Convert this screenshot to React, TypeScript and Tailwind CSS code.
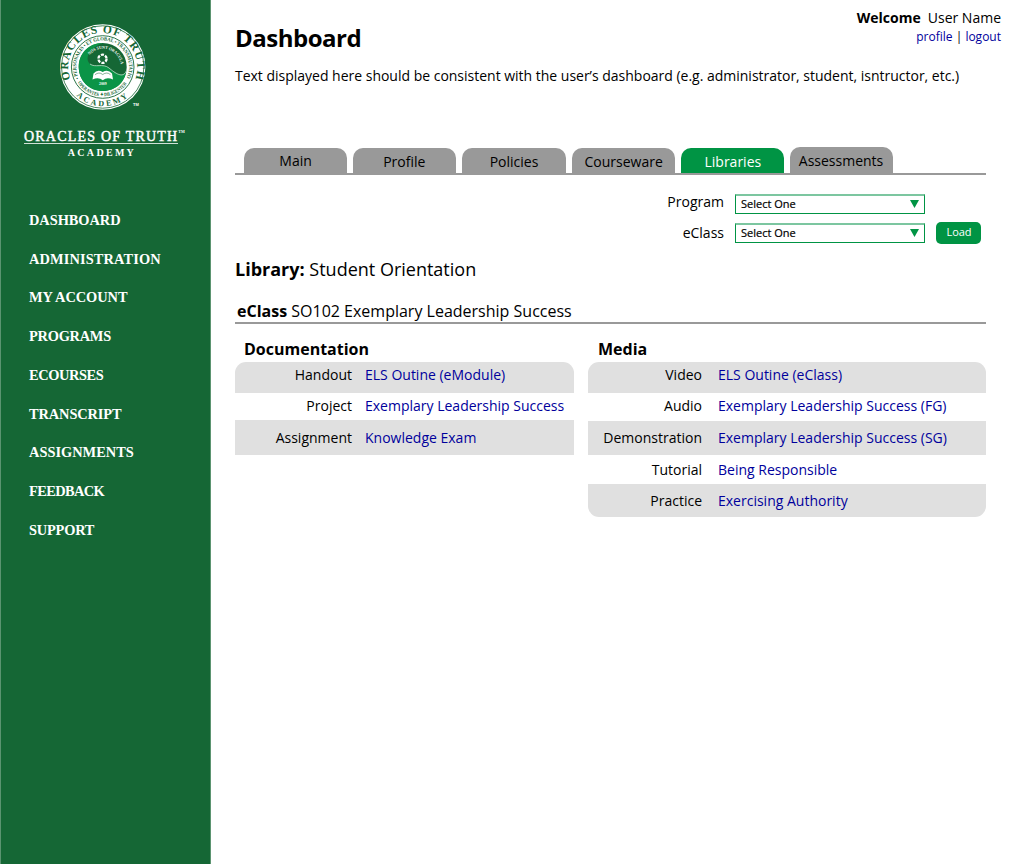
import React from "react";

const NAV = [
  ["DASHBOARD", "tracking-[-0.05px]"],
  ["ADMINISTRATION", "tracking-[0.12px]"],
  ["MY ACCOUNT", "tracking-[-0.05px]"],
  ["PROGRAMS", "tracking-[-0.25px]"],
  ["ECOURSES", "tracking-[-0.4px]"],
  ["TRANSCRIPT", "tracking-[-0.1px]"],
  ["ASSIGNMENTS", "tracking-normal"],
  ["FEEDBACK", "tracking-[-0.6px]"],
  ["SUPPORT", "tracking-[-0.2px]"],
];

function Seal() {
  return (
    <svg className="mt-[24px] ml-[58px] block h-[88px] w-[88px] shrink-0" viewBox="0 0 88 88">
      <defs>
        <path id="outer-top" d="M 11.39 55.4 A 34.5 34.5 0 1 1 76.1 55.4" />
        <path id="outer-bottom" d="M 11 64 A 38.6 38.6 0 0 0 76.5 64" />
        <path id="mid-top" d="M 20 54.5 A 26.4 26.4 0 1 1 67.4 54.5" />
        <path id="mid-bottom" d="M 18.2 57.7 A 29.5 29.5 0 0 0 69.2 57.7" />
        <path id="inner-top" d="M 30.5 31 A 17.8 17.8 0 0 1 61 48" />
      </defs>
      <circle cx="43.7" cy="43" r="42.7" fill="#fff" />
      <circle cx="43.7" cy="43" r="41.2" fill="none" stroke="#156735" strokeWidth="0.8" />
      <circle cx="43.7" cy="43" r="31.3" fill="none" stroke="#156735" strokeWidth="0.9" />
      <circle cx="43.7" cy="43" r="24" fill="#156735" />
      <path
        d="M43.7 19 C28 19 19.7 31 19.7 43 C20 57 30 67 43.7 67 C57 67 66 58 67.3 47 C64 55 56 49 50 44 C44 39 36 44 31 40 C25 34 31 24 43.7 19Z"
        fill="#0b9447"
      />
      <path
        d="M31 40 C36 44 44 39 50 44 C56 49 64 55 67.3 47"
        fill="none"
        stroke="#d9efe0"
        strokeWidth="0.7"
      />
      <circle cx="43.5" cy="34.8" r="4.1" fill="none" stroke="#fff" strokeWidth="2.3" strokeDasharray="3.1 1.2" />
      <path
        d="M34.5 49.5 Q38.5 44.8 43.7 48 Q49 44.8 53 49.5 L54 55.5 Q48 52.5 43.8 56.2 Q39.5 52.5 33.5 55.5Z"
        fill="#fff"
      />
      <path d="M36 50.7 Q40 47.5 43.7 50.5 Q48 47.5 51.5 50.7" fill="none" stroke="#156735" strokeWidth="0.5" />
      <g fill="#156735" fontFamily="Liberation Serif, serif" fontWeight="700">
        <text fontSize="11.5">
          <textPath href="#outer-top" textLength="132" lengthAdjust="spacing">ORACLES OF TRUTH</textPath>
        </text>
        <text fontSize="8">
          <textPath href="#outer-bottom" startOffset="10" textLength="56">ACADEMY</textPath>
        </text>
        <text fontSize="5.2">
          <textPath href="#mid-top" textLength="106" lengthAdjust="spacingAndGlyphs">• PERSONALIS • ET GLOBAL • TRANSMUTATIO</textPath>
        </text>
        <text fontSize="5">
          <textPath href="#mid-bottom" startOffset="1" textLength="58" lengthAdjust="spacingAndGlyphs">OPERANTES ✦ DILIGENTER</textPath>
        </text>
      </g>
      <g fill="#fff" fontFamily="Liberation Serif, serif" fontWeight="700">
        <text fontSize="4.2">
          <textPath href="#inner-top" textLength="41" lengthAdjust="spacingAndGlyphs">NOS SUNT ORACULA</textPath>
        </text>
        <text x="40" y="61" fontSize="3.8">2009</text>
        <text x="74" y="82" fontSize="4" fontFamily="Liberation Sans, sans-serif">TM</text>
      </g>
    </svg>
  );
}

function Sidebar() {
  return (
    <aside className="flex h-[864px] w-[211px] shrink-0 flex-col border-r border-l border-[#5b9470] bg-[#156735] font-['Liberation_Serif',serif] text-white">
      <Seal />
      <div className="ml-[23px] flex h-[47px] w-[170px] flex-col pt-[16px]">
        <div className="flex h-[15px] w-[162px] items-start leading-[17px] whitespace-nowrap">
          <span className="text-[14px] tracking-[1.2px] [-webkit-text-stroke:0.45px_white]">ORACLES OF TRUTH</span>
          <span className="text-[4px] leading-[8px] font-bold">TM</span>
        </div>
        <div className="h-px w-[154px] bg-[#d0e1d7]" />
        <div className="w-[156px] pt-[4px] text-center text-[10px] leading-[10px] font-bold tracking-[2.3px]">ACADEMY</div>
      </div>
      <nav className="mt-[42px] ml-[28px] flex flex-col text-[14.4px] font-bold">
        {NAV.map(([label, tracking]) => (
          <a key={label} href="#" className={`h-[38.73px] leading-[38.73px] whitespace-nowrap ${tracking}`}>
            {label}
          </a>
        ))}
      </nav>
    </aside>
  );
}

const TABS = [
  ["Main", "ml-[9px] h-[25px] bg-[#999] pb-px"],
  ["Profile", "ml-[6px] h-[25px] bg-[#999] pt-[2px] pr-px"],
  ["Policies", "ml-[6px] h-[25px] bg-[#999] pt-[2px]"],
  ["Courseware", "ml-[6px] h-[25px] bg-[#999] pt-[2px] pl-px"],
  ["Libraries", "ml-[6px] h-[25px] bg-[#009444] pt-[2px] pl-px text-white"],
  ["Assessments", "ml-[6px] h-[26px] bg-[#999] pr-px"],
];

function Select() {
  return (
    <button className="flex h-[20px] w-[190px] items-center justify-between border border-t-2 border-[#009444] border-t-[#7cc6a0] pr-[5px] pl-[5px] text-[11px] leading-[16px]">
      <span className="mb-[2px] [-webkit-text-stroke:0.2px_black]">Select One</span>
      <svg className="mb-px h-[8px] w-[9px]" viewBox="0 0 9 8">
        <path d="M0 0H9L4.5 8Z" fill="#009444" />
      </svg>
    </button>
  );
}

type Row = [string, string, string];

const DOCS: Row[] = [
  ["Handout", "ELS Outine (eModule)", "h-[31px] rounded-t-[11px] bg-[#e0e0e0] pb-[5px]"],
  ["Project", "Exemplary Leadership Success", "h-[27px] pb-px"],
  ["Assignment", "Knowledge Exam", "h-[35px] bg-[#e0e0e0] pt-px"],
];

const MEDIA: Row[] = [
  ["Video", "ELS Outine (eClass)", "h-[31px] rounded-t-[11px] bg-[#e0e0e0] pb-[5px]"],
  ["Audio", "Exemplary Leadership Success (FG)", "h-[28px] pb-[2px]"],
  ["Demonstration", "Exemplary Leadership Success (SG)", "h-[34px] bg-[#e0e0e0]"],
  ["Tutorial", "Being Responsible", "h-[29px] pt-px"],
  ["Practice", "Exercising Authority", "h-[33px] rounded-b-[11px] bg-[#e0e0e0]"],
];

type ListingProps = { title: string; rows: Row[]; width: string; label: string; indent: string };

function Listing({ title, rows, width, label, indent }: ListingProps) {
  return (
    <section className={`flex flex-col ${width}`}>
      <h3 className={`h-[24px] text-[16px] leading-[22px] font-bold ${indent}`}>{title}</h3>
      {rows.map(([kind, text, style]) => (
        <div key={kind} className={`flex items-center text-[14px] leading-[20px] whitespace-nowrap ${style}`}>
          <span className={`text-right ${label}`}>{kind}</span>
          <a href="#" className="text-[#00009c]">{text}</a>
        </div>
      ))}
    </section>
  );
}

export default function App() {
  return (
    <div className="flex h-[864px] w-[1024px] overflow-hidden bg-white font-['Open_Sans','Noto_Sans',sans-serif] text-black">
      <Sidebar />
      <main className="ml-[24px] flex w-[767px] flex-col">
        <header className="flex h-[62px] justify-between">
          <h1 className="pt-[22px] text-[24px] leading-[32px] font-bold tracking-[-0.5px]">Dashboard</h1>
          <div className="pt-[8px] pr-px text-right">
            <div className="text-[14px] leading-[20px]">
              <b className="mr-[7px]">Welcome</b>User Name
            </div>
            <div className="text-[12px] leading-[18px] font-medium">
              <a href="#" className="text-[#00009c]">profile</a> | <a href="#" className="text-[#00009c]">logout</a>
            </div>
          </div>
        </header>
        <p className="h-[85px] pt-[4px] text-[14px] leading-[20px] tracking-[-0.01px] whitespace-nowrap">
          Text displayed here should be consistent with the user’s dashboard (e.g. administrator, student, isntructor, etc.)
        </p>
        <div className="flex h-[28px] w-[751px] items-end border-b-2 border-[#999] text-[14px]">
          {TABS.map(([label, style]) => (
            <button key={label} className={`flex w-[103.2px] items-center justify-center rounded-t-[10px] ${style}`}>
              {label}
            </button>
          ))}
        </div>
        <div className="mt-[16px] ml-[400px] flex flex-col text-[14px]">
          <div className="flex h-[29px] items-start">
            <span className="mr-[11px] w-[89px] text-right leading-[22px]">Program</span>
            <div className="pt-[3px]"><Select /></div>
          </div>
          <div className="flex h-[29px] items-start">
            <span className="mr-[11px] w-[89px] text-right leading-[26px]">eClass</span>
            <div className="pt-[3px]"><Select /></div>
            <button className="mt-[2px] ml-[11px] flex h-[22px] w-[45px] justify-center rounded-[5px] bg-[#009444] pl-px text-[11px] leading-[19px] text-white">
              Load
            </button>
          </div>
        </div>
        <h2 className="mt-[8px] h-[43px] text-[18px] leading-[24px]"><b>Library:</b> Student Orientation</h2>
        <div className="h-[24px] w-[751px] border-b-2 border-[#999] pl-[2px] text-[16px] leading-[22px]">
          <b>eClass</b> SO102 Exemplary Leadership Success
        </div>
        <div className="mt-[14px] flex items-start gap-[14px]">
          <Listing title="Documentation" rows={DOCS} width="w-[339px]" label="mr-[13px] w-[117px]" indent="pl-[9px]" />
          <Listing title="Media" rows={MEDIA} width="w-[398px]" label="mr-[16px] w-[114px]" indent="pl-[10px]" />
        </div>
      </main>
    </div>
  );
}
